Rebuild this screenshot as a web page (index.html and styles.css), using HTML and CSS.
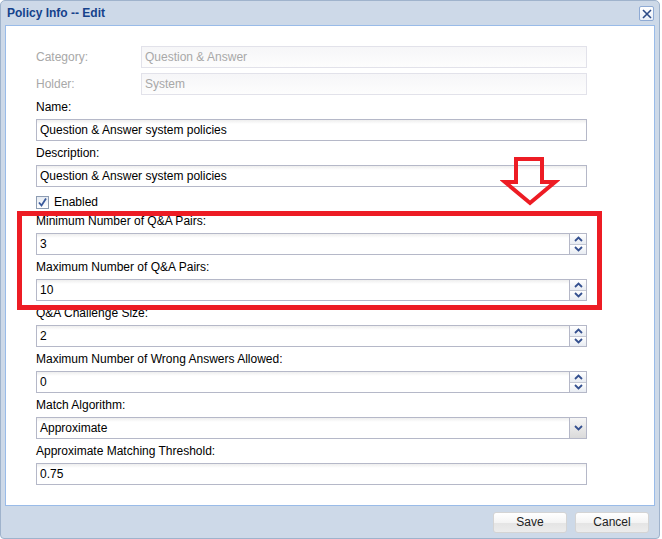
FILE: index.html
```html
<!DOCTYPE html>
<html>
<head>
<meta charset="utf-8">
<title>Policy Info -- Edit</title>
<link rel="stylesheet" href="styles.css">
</head>
<body>
<div class="window">
  <div class="header">
    <span class="title">Policy Info -- Edit</span>
    <span class="close">
      <svg width="10" height="10" viewBox="0 0 10 10"><path d="M1 1 L9 9 M9 1 L1 9" stroke="#2c4a86" stroke-width="1.6" fill="none"/></svg>
    </span>
  </div>
  <div class="body">
    <div class="inline-row">
      <span class="inline-label disabled">Category:</span>
      <div class="input disabled-input short">Question &amp; Answer</div>
    </div>
    <div class="inline-row">
      <span class="inline-label disabled">Holder:</span>
      <div class="input disabled-input short">System</div>
    </div>

    <div class="label">Name:</div>
    <div class="input">Question &amp; Answer system policies</div>

    <div class="label">Description:</div>
    <div class="input">Question &amp; Answer system policies</div>

    <div class="check-row">
      <span class="checkbox">
        <svg width="11" height="11" viewBox="0 0 11 11"><path d="M2 5.5 L4.5 8.5 L9 1.5" stroke="#3a5a9c" stroke-width="1.8" fill="none"/></svg>
      </span>
      <span>Enabled</span>
    </div>

    <div class="label">Minimum Number of Q&amp;A Pairs:</div>
    <div class="input spin">3
      <span class="spinner"><span class="spin-btn"><svg width="9" height="6" viewBox="0 0 9 6"><path d="M1 5 L4.5 1.5 L8 5" stroke="#34508f" stroke-width="1.8" fill="none"/></svg></span><span class="spin-btn"><svg width="9" height="6" viewBox="0 0 9 6"><path d="M1 1 L4.5 4.5 L8 1" stroke="#34508f" stroke-width="1.8" fill="none"/></svg></span></span>
    </div>

    <div class="label">Maximum Number of Q&amp;A Pairs:</div>
    <div class="input spin">10
      <span class="spinner"><span class="spin-btn"><svg width="9" height="6" viewBox="0 0 9 6"><path d="M1 5 L4.5 1.5 L8 5" stroke="#34508f" stroke-width="1.8" fill="none"/></svg></span><span class="spin-btn"><svg width="9" height="6" viewBox="0 0 9 6"><path d="M1 1 L4.5 4.5 L8 1" stroke="#34508f" stroke-width="1.8" fill="none"/></svg></span></span>
    </div>

    <div class="label">Q&amp;A Challenge Size:</div>
    <div class="input spin">2
      <span class="spinner"><span class="spin-btn"><svg width="9" height="6" viewBox="0 0 9 6"><path d="M1 5 L4.5 1.5 L8 5" stroke="#34508f" stroke-width="1.8" fill="none"/></svg></span><span class="spin-btn"><svg width="9" height="6" viewBox="0 0 9 6"><path d="M1 1 L4.5 4.5 L8 1" stroke="#34508f" stroke-width="1.8" fill="none"/></svg></span></span>
    </div>

    <div class="label">Maximum Number of Wrong Answers Allowed:</div>
    <div class="input spin">0
      <span class="spinner"><span class="spin-btn"><svg width="9" height="6" viewBox="0 0 9 6"><path d="M1 5 L4.5 1.5 L8 5" stroke="#34508f" stroke-width="1.8" fill="none"/></svg></span><span class="spin-btn"><svg width="9" height="6" viewBox="0 0 9 6"><path d="M1 1 L4.5 4.5 L8 1" stroke="#34508f" stroke-width="1.8" fill="none"/></svg></span></span>
    </div>

    <div class="label">Match Algorithm:</div>
    <div class="input spin">Approximate
      <span class="combo-btn"><svg width="9" height="6" viewBox="0 0 9 6"><path d="M1 1 L4.5 4.5 L8 1" stroke="#34508f" stroke-width="1.8" fill="none"/></svg></span>
    </div>

    <div class="label">Approximate Matching Threshold:</div>
    <div class="input">0.75</div>
  </div>
  <div class="footer">
    <span class="button">Save</span>
    <span class="button">Cancel</span>
  </div>
</div>

<div class="highlight"></div>
<svg class="arrow" width="60" height="60" viewBox="0 0 60 60">
  <polygon points="16,9 42,9 42,32 55,32 30,53 5,32 16,32" fill="none" stroke="#ed1c24" stroke-width="4" stroke-linejoin="miter"/>
</svg>
</body>
</html>
```

FILE: styles.css
```css
* { box-sizing: border-box; }

html, body {
  margin: 0;
  padding: 0;
  background: #ffffff;
}

body {
  position: relative;
  width: 662px;
  height: 539px;
  overflow: hidden;
  font-family: "Liberation Sans", Arial, sans-serif;
  font-size: 12px;
  color: #000;
}

.window {
  width: 660px;
  height: 539px;
  border: 1px solid #9fb3cc;
  border-radius: 5px 5px 4px 4px;
  background: #cdd9e8;
  display: flex;
  flex-direction: column;
}

.header {
  height: 24px;
  display: flex;
  align-items: center;
  justify-content: space-between;
  padding: 0 5px 0 6px;
}

.title {
  font-weight: bold;
  font-size: 12px;
  color: #15428b;
}

.close {
  width: 15px;
  height: 15px;
  border: 1px solid #8eaad4;
  border-radius: 2px;
  background: linear-gradient(#ffffff, #e9eff8);
  display: flex;
  align-items: center;
  justify-content: center;
  margin-top: 1px;
}

.body {
  margin: 0 4px;
  height: 481px;
  border: 1px solid #99bbe8;
  background: #ffffff;
  padding: 20px 0 0 30px;
}

.inline-row {
  display: flex;
  align-items: center;
  height: 22px;
}

.inline-row + .inline-row {
  margin-top: 5px;
}

.inline-label {
  width: 105px;
}

.disabled {
  color: #a8a8a8;
}

.label {
  line-height: 24px;
  height: 24px;
  white-space: nowrap;
}

.input {
  position: relative;
  width: 551px;
  height: 22px;
  border: 1px solid #b5b8c8;
  background: linear-gradient(#eeeeee 0px, #ffffff 4px, #ffffff 100%);
  padding: 0 3px;
  line-height: 20px;
  white-space: nowrap;
}

.input.short {
  width: 446px;
}

.disabled-input {
  border-color: #e2e2ea;
  background: linear-gradient(#f6f6f8, #fdfdfd);
  color: #a8a8a8;
}

.check-row {
  height: 22px;
  display: flex;
  align-items: center;
  gap: 5px;
  padding-top: 8px;
  line-height: 14px;
}

.checkbox {
  width: 13px;
  height: 13px;
  border: 1px solid #8d9cb2;
  background: linear-gradient(#e6ebf2, #ffffff);
  display: flex;
  align-items: center;
  justify-content: center;
}

.spinner {
  position: absolute;
  right: 0;
  top: 0;
  width: 17px;
  height: 20px;
  border-left: 1px solid #b5b8c8;
  display: flex;
  flex-direction: column;
}

.spin-btn {
  flex: 1;
  display: flex;
  align-items: center;
  justify-content: center;
  background: linear-gradient(#ffffff, #e8ecf2);
}

.spin-btn + .spin-btn {
  border-top: 1px solid #c4c8d4;
}

.combo-btn {
  position: absolute;
  right: 0;
  top: 0;
  width: 17px;
  height: 20px;
  border-left: 1px solid #b5b8c8;
  background: linear-gradient(#f6f6f6, #dadada);
  display: flex;
  align-items: center;
  justify-content: center;
}

.footer {
  flex: 1;
  display: flex;
  justify-content: flex-end;
  align-items: flex-start;
  gap: 8px;
  padding: 6px 10px 0 0;
}

.button {
  width: 74px;
  height: 21px;
  border: 1px solid #d4d4d4;
  border-radius: 3px;
  background: linear-gradient(#ffffff 0%, #f4f4f4 50%, #e4e4e4 51%, #ececec 100%);
  text-align: center;
  line-height: 19px;
  color: #222;
}

.highlight {
  position: absolute;
  left: 17px;
  top: 211px;
  width: 585px;
  height: 99px;
  border: 5px solid #ed1c24;
}

.arrow {
  position: absolute;
  left: 500px;
  top: 150px;
}
```
